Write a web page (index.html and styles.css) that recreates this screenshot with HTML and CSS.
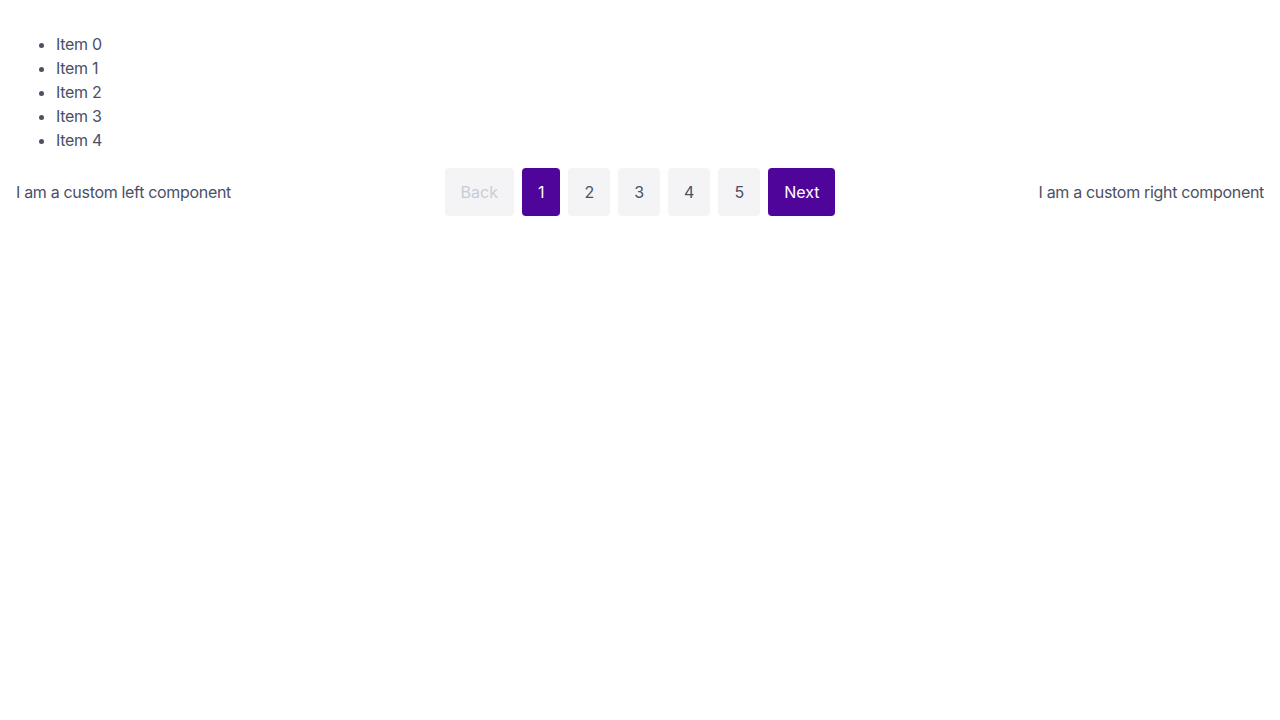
FILE: index.html
```html
<!DOCTYPE html>
<html>
<head>
<meta charset="utf-8">
<link rel="stylesheet" href="styles.css">
</head>
<body>
<div class="page">
  <ul class="list">
    <li>Item 0</li>
    <li>Item 1</li>
    <li>Item 2</li>
    <li>Item 3</li>
    <li>Item 4</li>
  </ul>
  <div class="pager-row">
    <div class="left">I am a custom left component</div>
    <nav class="pager">
      <button class="btn disabled">Back</button>
      <button class="btn active">1</button>
      <button class="btn">2</button>
      <button class="btn">3</button>
      <button class="btn">4</button>
      <button class="btn">5</button>
      <button class="btn active">Next</button>
    </nav>
    <div class="right">I am a custom right component</div>
  </div>
</div>
</body>
</html>
```
FILE: styles.css
```css
html, body {
  margin: 0;
  padding: 0;
  background: #ffffff;
}
body {
  font-family: Inter, "Liberation Sans", sans-serif;
  font-size: 16px;
  line-height: 24px;
  color: #4b5066;
}
.page {
  padding: 16px;
}
.list {
  margin: 16px 0;
  padding-left: 40px;
  letter-spacing: -0.3px;
}
.pager-row {
  display: grid;
  grid-template-columns: 1fr auto 1fr;
  align-items: center;
}
.left,
.right {
  letter-spacing: -0.32px;
}
.left {
  justify-self: start;
}
.right {
  justify-self: end;
}
.pager {
  display: flex;
  gap: 8px;
}
.btn {
  font-family: Inter, "Liberation Sans", sans-serif;
  font-size: 16px;
  line-height: 24px;
  height: 48px;
  padding: 0 16px;
  border: none;
  border-radius: 4px;
  background: #f4f4f6;
  color: #4b5066;
  cursor: pointer;
}
.btn.active {
  background: #4f0599;
  color: #ffffff;
}
.btn.disabled {
  color: #c8ccd8;
  cursor: default;
}
```
